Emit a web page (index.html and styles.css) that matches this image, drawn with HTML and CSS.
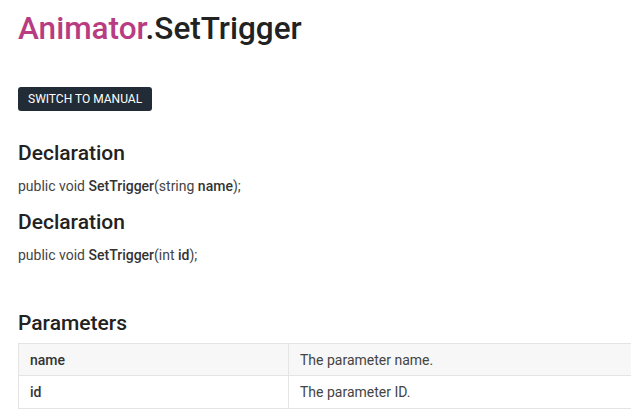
FILE: index.html
```html
<!DOCTYPE html>
<html>
<head>
<meta charset="utf-8">
<link rel="stylesheet" href="styles.css">
</head>
<body>
<div class="page">
  <h1 class="title"><span class="cls">Animator</span>.SetTrigger</h1>
  <div class="switch-row"><a class="switch-btn">SWITCH TO MANUAL</a></div>
  <h2 class="sec">Declaration</h2>
  <p class="decl">public void <b>SetTrigger</b>(string <b>name</b>);</p>
  <h2 class="sec">Declaration</h2>
  <p class="decl">public void <b>SetTrigger</b>(int <b>id</b>);</p>
  <h2 class="sec params">Parameters</h2>
  <table class="ptable">
    <tr class="odd"><td class="pname">name</td><td class="pdesc">The parameter name.</td></tr>
    <tr class="even"><td class="pname">id</td><td class="pdesc">The parameter ID.</td></tr>
  </table>
</div>
</body>
</html>
```
FILE: styles.css
```css
html, body {
  margin: 0;
  padding: 0;
  background: #fff;
  overflow: hidden;
}
body {
  font-family: Roboto, "Liberation Sans", sans-serif;
  color: #444;
}
.page {
  padding: 0 0 0 18px;
  width: 660px;
}
.title {
  margin: 0;
  padding-top: 9px;
  font-size: 31.5px;
  font-weight: 500;
  line-height: 40px;
  color: #222;
}
.cls {
  color: #b83c82;
}
.switch-row {
  margin-top: 38px;
  display: flex;
}
.switch-btn {
  display: inline-block;
  background: #222c37;
  color: #fff;
  font-size: 12px;
  line-height: 24px;
  height: 24px;
  padding: 0 10px;
  border-radius: 3px;
}
.sec {
  margin: 0;
  font-size: 21px;
  font-weight: 500;
  color: #222;
  line-height: 30px;
}
.switch-row + .sec {
  margin-top: 27px;
}
.decl {
  margin: 8px 0 11px;
  font-size: 14px;
  line-height: 20px;
  color: #444;
}
.decl b {
  font-weight: 500;
  color: #333;
}
.params {
  margin-top: 43px;
}
.ptable {
  margin-top: 5px;
  border-collapse: collapse;
  width: 640px;
  font-size: 14px;
}
.ptable td {
  border: 1px solid #e4e4e4;
  padding: 0 11px;
  box-sizing: border-box;
}
.ptable tr.odd td {
  background: #f7f7f7;
  height: 32px;
}
.ptable tr.even td {
  height: 33px;
}
.pname {
  width: 270px;
  font-weight: 500;
  color: #333;
}
.pdesc {
  color: #444;
}
```
